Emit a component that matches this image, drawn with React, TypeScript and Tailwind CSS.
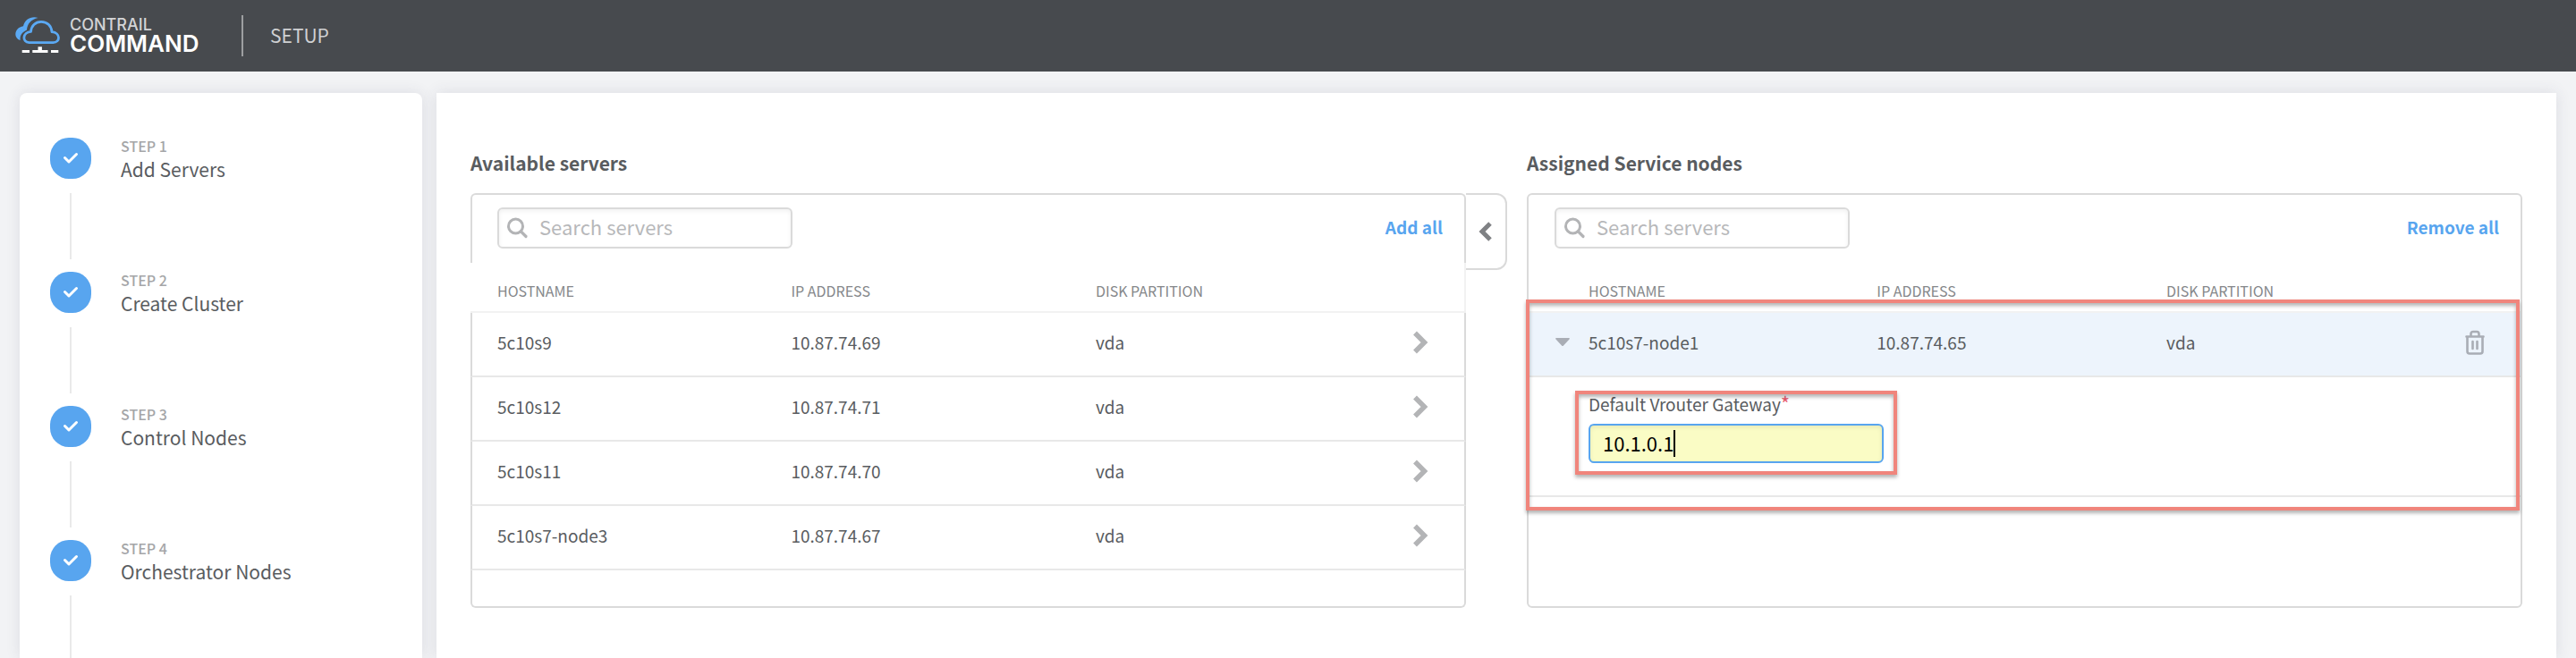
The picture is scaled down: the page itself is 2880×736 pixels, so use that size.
import React from "react";

const steps = ["Add Servers", "Create Cluster", "Control Nodes", "Orchestrator Nodes"];

const available = [
  { host: "5c10s9", ip: "10.87.74.69", disk: "vda" },
  { host: "5c10s12", ip: "10.87.74.71", disk: "vda" },
  { host: "5c10s11", ip: "10.87.74.70", disk: "vda" },
  { host: "5c10s7-node3", ip: "10.87.74.67", disk: "vda" },
];

function Logo() {
  return (
    <svg width="51" height="42" viewBox="0 0 51 42" fill="none" aria-hidden="true">
      <path
        d="M25.500 1C18-1.200 10.800 2.500 9 10.300C2.500 11.300-1 17 0.800 21.800C1.700 24.200 3.500 25.600 5.600 26C5.200 20.500 7.500 17.300 13 14.600C13.400 8 17.500 2.800 25.500 1Z"
        fill="#5ba9f3"
      />
      <path
        d="M15.500 28.600H42.500C50.500 28.600 51 17.600 41 16.600C40.500 10 36 5.400 29 5.400C22.500 5.400 18 10 17.500 16.300C8 17 7.500 28.200 15.500 28.600Z"
        stroke="#5ba9f3"
        strokeWidth="2.800"
        strokeLinejoin="round"
      />
      <path d="M7.700 38.500H16M19.300 38.500H36.500M40 38.500H48.300" stroke="#fff" strokeWidth="3" />
      <path d="M27.700 33.300V38" stroke="#fff" strokeWidth="4.400" />
    </svg>
  );
}

function Check() {
  return (
    <svg width="18" height="14" viewBox="0 0 18 14" fill="none" aria-hidden="true">
      <path d="M2.500 6.500L7 11L15.500 2.500" stroke="#fff" strokeWidth="3" strokeLinecap="round" strokeLinejoin="round" />
    </svg>
  );
}

function SearchBox({ id }: { id: string }) {
  return (
    <label
      htmlFor={id}
      className="flex h-[46px] w-[330px] items-center gap-3 rounded-md border-2 border-[#dadada] bg-white pl-2 shadow-[inset_0_2px_5px_rgba(0,0,0,0.06)]"
    >
      <svg width="25" height="24" viewBox="0 0 25 24" fill="none" stroke="#b3b4b6" className="shrink-0" aria-hidden="true">
        <circle cx="10.500" cy="10" r="8" strokeWidth="3" />
        <path d="M16.500 16L22 21.500" strokeWidth="3.200" strokeLinecap="round" />
      </svg>
      <input
        id={id}
        type="search"
        aria-label="Search servers"
        placeholder="Search servers"
        className="w-full min-w-0 bg-transparent pb-1 text-[22px] leading-7 outline-none placeholder:text-[#b7b8ba]"
      />
    </label>
  );
}

const th = "border-b-2 border-[#f2f2f2] pt-2 text-left text-[16px] font-normal text-[#85878a]";
const td = "border-b-2 border-[#e8e8e8] pb-1";

export default function App() {
  return (
    <div className="flex min-h-screen flex-col bg-[#f2f3f5] font-['Noto_Sans_CJK_SC',sans-serif] text-[#595c5f]">
      <header className="flex h-20 shrink-0 items-center bg-[#474a4e] pl-[17px]">
        <div className="flex w-[253px] items-center gap-[10px]">
          <Logo />
          <div className="pt-[2px] font-[Inter,sans-serif]">
            <div className="text-[18px] leading-4 font-medium text-[#d3d4d6]">CONTRAIL</div>
            <div className="text-[26px] leading-[26px] font-semibold text-white">COMMAND</div>
          </div>
        </div>
        <div className="h-[46px] w-[2px] bg-[#9d9fa1]" />
        <h1 className="ml-[30px] pb-[2px] text-[21px] leading-8 font-normal text-[#cfd0d2]">SETUP</h1>
      </header>

      <div className="flex flex-1 gap-4 px-[22px] pt-6">
        <nav aria-label="Steps" className="w-[450px] shrink-0 rounded-t-lg bg-white px-[34px] pt-[50px] shadow-[0_0_16px_rgba(60,60,90,0.12)]">
          <ol>
            {steps.map((name, i) => (
              <li key={name} className="flex h-[150px] gap-[33px] last:h-[132px]">
                <div className="flex flex-col items-center gap-4">
                  <span className="flex h-[46px] w-[46px] shrink-0 items-center justify-center rounded-[21px] bg-[#58a5ef]">
                    <Check />
                  </span>
                  <span className="min-h-0 w-[2px] shrink basis-[74px] bg-[#e9e9e9]" />
                </div>
                <div>
                  <div className="text-[16px] leading-[18px] font-medium text-[#a5a6a8]">STEP {i + 1}</div>
                  <div className="text-[21px] leading-[34px]">{name}</div>
                </div>
              </li>
            ))}
          </ol>
        </nav>

        <main className="grid min-w-0 flex-1 grid-cols-2 content-start gap-[68px] bg-white px-[38px] pt-[62px] shadow-[0_0_16px_rgba(60,60,90,0.12)]">
          <section className="flex flex-col">
            <h2 className="mb-[18px] text-[21px] leading-8 font-bold">Available servers</h2>
            <div className="relative flex flex-1 flex-col">
              <div className="flex h-[78px] items-start justify-between rounded-t-md border-2 border-b-0 border-[#dadada] pt-[14px] pr-6 pl-7">
                <SearchBox id="search-available" />
                <button className="text-[19px] leading-[44px] font-bold text-[#58a5ef]">Add all</button>
              </div>
              <table className="w-full table-fixed border-separate border-spacing-0 text-[19px]">
                <thead>
                  <tr className="h-14">
                    <th className={`${th} w-[32.200%] pl-[30px]`}>HOSTNAME</th>
                    <th className={`${th} w-[30.600%]`}>IP ADDRESS</th>
                    <th className={`${th} border-r-2`} colSpan={2}>DISK PARTITION</th>
                  </tr>
                </thead>
                <tbody>
                  {available.map((s) => (
                    <tr key={s.host} className="h-[72px]">
                      <td className={`${td} border-l-2 border-l-[#dadada] pl-7`}>{s.host}</td>
                      <td className={td}>{s.ip}</td>
                      <td className={td}>{s.disk}</td>
                      <td className={`${td} border-r-2 border-r-[#dadada] pr-10`}>
                        <button aria-label={`Assign ${s.host}`} className="ml-auto block">
                          <svg width="20" height="26" viewBox="0 0 20 26" fill="none" aria-hidden="true">
                            <path d="M5 2.500L15.500 13L5 23.500" stroke="#b3b4b6" strokeWidth="5.500" />
                          </svg>
                        </button>
                      </td>
                    </tr>
                  ))}
                </tbody>
              </table>
              <div className="min-h-[42px] flex-1 rounded-b-md border-2 border-t-0 border-[#dadada]" />
              <button
                aria-label="Collapse"
                className="absolute top-0 left-full flex h-[86px] w-[46px] items-center justify-center rounded-r-xl border-2 border-l-0 border-[#dadada]"
              >
                <svg width="18" height="24" viewBox="0 0 18 24" fill="none" aria-hidden="true">
                  <path d="M14 3L5 12L14 21" stroke="#7f8184" strokeWidth="5" />
                </svg>
              </button>
            </div>
          </section>

          <section className="flex flex-col">
            <h2 className="mb-[18px] text-[21px] leading-8 font-bold">Assigned Service nodes</h2>
            <div className="relative flex flex-1 flex-col rounded-md border-2 border-[#dadada]">
              <div className="flex h-[76px] items-start justify-between pt-[14px] pr-6 pl-[29px]">
                <SearchBox id="search-assigned" />
                <button className="text-[19px] leading-[44px] font-bold text-[#58a5ef]">Remove all</button>
              </div>
              <table className="w-full table-fixed border-separate border-spacing-0 text-[19px]">
                <thead>
                  <tr className="h-14">
                    <th className={`${th} w-[35.100%] pl-[67px]`}>HOSTNAME</th>
                    <th className={`${th} w-[29.200%]`}>IP ADDRESS</th>
                    <th className={th} colSpan={2}>DISK PARTITION</th>
                  </tr>
                </thead>
                <tbody>
                  <tr className="h-[72px] bg-[#edf4fc]">
                    <td className={`${td} pl-[30px]`}>
                      <div className="flex items-center gap-[21px]">
                        <button aria-label="Toggle details">
                          <svg width="16" height="10" viewBox="0 0 16 10" aria-hidden="true">
                            <path d="M1 0H15Q16.500 0.500 15.500 1.500L9 8.500Q8 9.500 7 8.500L0.500 1.500Q-0.500 0.500 1 0Z" fill="#a9adb5" />
                          </svg>
                        </button>
                        5c10s7-node1
                      </div>
                    </td>
                    <td className={td}>10.87.74.65</td>
                    <td className={td}>vda</td>
                    <td className={`${td} pr-10`}>
                      <button aria-label="Remove 5c10s7-node1" className="ml-auto block">
                        <svg width="22" height="28" viewBox="0 0 22 28" fill="none" stroke="#a9adb5" strokeWidth="2.600" strokeLinecap="round" strokeLinejoin="round" aria-hidden="true">
                          <path d="M1.500 7.500H20.500M6.500 7V4.500Q6.500 2 9 2H13Q15.500 2 15.500 4.500V7M2.500 7.500V24Q2.500 26.500 5 26.500H17Q19.500 26.500 19.500 24V7.500M8.500 13V21M13.500 13V21" />
                        </svg>
                      </button>
                    </td>
                  </tr>
                  <tr className="h-[134px]">
                    <td colSpan={4} className="border-b-2 border-[#e8e8e8] pt-[14px] pl-[67px] align-top">
                      <div className="relative w-[330px]">
                        <label htmlFor="gateway" className="flex h-[38px] items-start leading-8">
                          Default Vrouter Gateway
                          <span className="text-[22px] leading-7 text-[#e8596c]">*</span>
                        </label>
                        <div className="flex h-11 items-center rounded-md border-2 border-[#58a5ef] bg-[#fafcc5] pl-[14px] shadow-[inset_0_2px_5px_rgba(0,0,0,0.08)]">
                          <input
                            id="gateway"
                            defaultValue="10.1.0.1"
                            className="bg-transparent pb-[2px] text-[22px] leading-8 text-black outline-none [field-sizing:content]"
                          />
                          <span className="h-[30px] w-[2px] bg-black" />
                        </div>
                        <div className="pointer-events-none absolute -inset-x-[15px] top-[1px] -bottom-[13px] border-4 border-[#f0857c] shadow-[0_3px_4px_rgba(0,0,0,0.3),inset_0_3px_4px_rgba(0,0,0,0.3)]" />
                      </div>
                    </td>
                  </tr>
                </tbody>
              </table>
              <div className="pointer-events-none absolute top-[117px] right-[1px] -left-[3px] h-[236px] border-4 border-[#f0857c] shadow-[0_3px_4px_rgba(0,0,0,0.3),inset_0_3px_4px_rgba(0,0,0,0.3)]" />
            </div>
          </section>
        </main>
      </div>
    </div>
  );
}
